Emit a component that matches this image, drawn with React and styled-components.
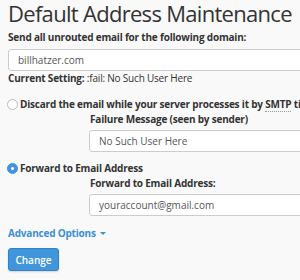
import React from 'react';
import styled, { createGlobalStyle } from 'styled-components';

const GlobalStyle = createGlobalStyle`
  html, body {
    margin: 0;
    padding: 0;
    background: #f9f9f9;
    overflow: hidden;
  }
  body {
    font-family: "Open Sans", "Liberation Sans", sans-serif;
    color: #333;
  }
`;

const Page = styled.div`
  width: 300px;
  height: 280px;
  padding: 0 0 0 8px;
  box-sizing: border-box;
  overflow: hidden;
  white-space: nowrap;
  letter-spacing: -0.2px;
`;

const Title = styled.h1`
  margin: 0;
  font-size: 22px;
  line-height: 27px;
  font-weight: 400;
  letter-spacing: -0.7px;
  color: #333;
`;

const Label = styled.div`
  font-size: 10px;
  font-weight: 700;
  line-height: 14px;
  margin-top: ${p => p.$top || 0}px;
  margin-left: ${p => p.$indent || 0}px;
`;

const Input = styled.div`
  margin-top: ${p => p.$top || 0}px;
  margin-left: ${p => p.$indent || 0}px;
  height: 22px;
  box-sizing: border-box;
  width: 400px;
  border: 1px solid #ccc;
  border-radius: 3px;
  background: #fff;
  font-size: 10px;
  line-height: 20px;
  padding-left: 9px;
  color: #555;
  letter-spacing: 0;
`;

const Setting = styled.div`
  font-size: 10px;
  line-height: 14px;
  b { font-weight: 700; }
`;

const RadioRow = styled.div`
  display: flex;
  align-items: center;
  gap: 2px;
  margin-top: ${p => p.$top || 0}px;
  margin-left: -1px;
  font-size: 10px;
  font-weight: 700;
  line-height: 14px;
`;

const Radio = styled.span`
  width: 11px;
  height: 11px;
  box-sizing: border-box;
  border-radius: 50%;
  flex: none;
  border: 1px solid ${p => (p.$checked ? '#3f96df' : '#bbb')};
  background: ${p => (p.$checked ? '#3f96df' : '#fff')};
  display: flex;
  align-items: center;
  justify-content: center;
  &::after {
    content: '';
    display: ${p => (p.$checked ? 'block' : 'none')};
    width: 3px;
    height: 3px;
    border-radius: 50%;
    background: #fff;
  }
`;

const Abbr = styled.span`
  border-bottom: 1px dotted #999;
`;

const Link = styled.a`
  display: flex;
  align-items: center;
  gap: 4px;
  margin-top: ${p => p.$top || 0}px;
  color: #3b8fd4;
  font-size: 10px;
  font-weight: 700;
  line-height: 14px;
  text-decoration: none;
  &::after {
    content: '';
    border-left: 3px solid transparent;
    border-right: 3px solid transparent;
    border-top: 3px solid #3b8fd4;
  }
`;

const Button = styled.button`
  display: block;
  margin-top: ${p => p.$top || 0}px;
  width: 51px;
  height: 23px;
  border: 1px solid #2f84c9;
  border-radius: 3px;
  background: #4196db;
  color: #fff;
  font-family: inherit;
  font-size: 10px;
  font-weight: 600;
  padding: 0;
  box-shadow: 0 1px 2px rgba(0, 0, 0, 0.15);
`;

export default function App() {
  return (
    <Page>
      <GlobalStyle />
      <Title>Default Address Maintenance</Title>
      <Label $top={3}>Send all unrouted email for the following domain:</Label>
      <Input $top={5}>billhatzer.com</Input>
      <Setting><b>Current Setting:</b> :fail: No Such User Here</Setting>
      <RadioRow $top={12}>
        <Radio />
        <span>Discard the email while your server processes it by <Abbr>SMTP</Abbr> time with an error message.</span>
      </RadioRow>
      <Label $top={1} $indent={82}>Failure Message (seen by sender)</Label>
      <Input $top={4} $indent={81}>No Such User Here</Input>
      <RadioRow $top={9}>
        <Radio $checked />
        <span>Forward to Email Address</span>
      </RadioRow>
      <Label $top={1} $indent={82}>Forward to Email Address:</Label>
      <Input $top={4} $indent={81}>youraccount@gmail.com</Input>
      <Link $top={10} href="#">Advanced Options</Link>
      <Button $top={8}>Change</Button>
    </Page>
  );
}
